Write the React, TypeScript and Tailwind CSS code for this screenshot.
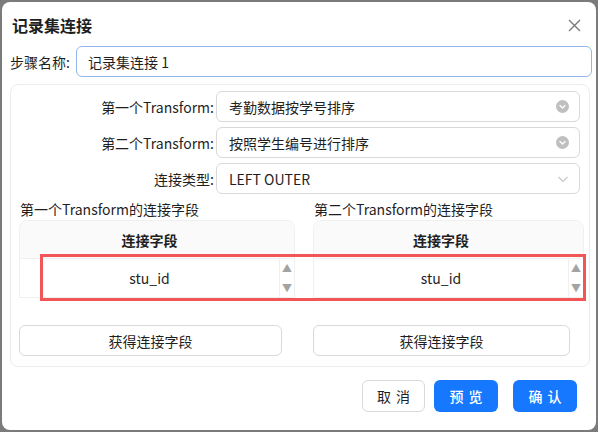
import React from 'react';

const font = { fontFamily: '"Noto Sans CJK SC", "Noto Sans", sans-serif' };

const ClearIcon = () => (
  <svg width="13" height="13" viewBox="0 0 13 13">
    <circle cx="6.5" cy="6.5" r="6.5" fill="#bfbfbf" />
    <path d="M4 5.5 L6.5 8 L9 5.5" stroke="#fff" strokeWidth="1.4" fill="none" strokeLinecap="round" strokeLinejoin="round" />
  </svg>
);

const Chevron = () => (
  <svg width="12" height="12" viewBox="0 0 12 12">
    <path d="M1.5 4 L6 8.5 L10.5 4" stroke="#c4c4c4" strokeWidth="1.1" fill="none" />
  </svg>
);

const SelectRow = ({ label, value, clear }: { label: string; value: string; clear: boolean }) => (
  <div className="flex items-center h-[31px]">
    <div className="w-[205px] pr-[2px] text-right text-[14px] leading-[20px] whitespace-nowrap text-[#1f1f1f]">{label}:</div>
    <div className="w-[364px] h-[31px] border border-[#d9d9d9] rounded-md flex items-center justify-between pl-[12px] pr-[10px] text-[14px] leading-[20px] text-[#1f1f1f]">
      <span>{value}</span>
      {clear ? <ClearIcon /> : <Chevron />}
    </div>
  </div>
);

const FieldTable = ({ title, width, btnWidth }: { title: string; width: string; btnWidth: string }) => (
  <div className="flex flex-col">
    <div className="text-[14px] text-[#1f1f1f] leading-[20px] pl-[1px]">{title}</div>
    <div className={`${width} mt-[1px] border border-[#f0f0f0] rounded-t-lg`}>
      <div className="h-[38px] bg-[#fafafa] rounded-t-lg flex items-center pr-[15px] border-b border-[#f0f0f0]">
        <div className="flex-1 text-center text-[14px] leading-[20px] font-bold text-[#1f1f1f]">连接字段</div>
      </div>
      <div className="flex h-[38px]">
        <div className="flex-1 flex items-center justify-center text-[14px] text-[#1f1f1f] border-r border-[#f0f0f0]">stu_id</div>
        <div className="w-[14px] flex flex-col items-center justify-between py-[3px] text-[#a3a3a3] text-[10px] leading-[12px]">
          <span>▲</span>
          <span>▼</span>
        </div>
      </div>
    </div>
    <button className={`${btnWidth} h-[31px] mt-[27px] border border-[#d9d9d9] rounded-md bg-white text-[14px] leading-[20px] text-[#1f1f1f]`}>
      获得连接字段
    </button>
  </div>
);

export default function App() {
  return (
    <div className="w-[598px] h-[432px] bg-[#7b7b7b] p-[2px]" style={font}>
      <div className="relative w-[594px] h-[428px] bg-white rounded-lg">
        <div className="flex items-center justify-between pl-[10px] pr-[15px] pt-[12px]">
          <div className="text-[16px] leading-[22px] font-bold text-[#1f1f1f]">记录集连接</div>
          <svg width="13" height="13" viewBox="0 0 13 13">
            <path d="M1 1 L12 12 M12 1 L1 12" stroke="#7a7a7a" strokeWidth="1.4" />
          </svg>
        </div>

        <div className="flex items-center mt-[10px] pl-[8px]">
          <div className="w-[66px] text-[14px] leading-[20px] whitespace-nowrap text-[#1f1f1f]">步骤名称:</div>
          <div className="w-[516px] h-[31px] border border-[#93b6ee] rounded-md flex items-center pl-[11px] text-[14px] leading-[20px] text-[#1f1f1f]">
            记录集连接 1
          </div>
        </div>

        <div className="ml-[8px] mt-[7px] w-[580px] h-[283px] border border-[#ececec] rounded-lg pt-[6px]">
          <div className="flex flex-col gap-[5px]">
            <SelectRow label="第一个Transform" value="考勤数据按学号排序" clear />
            <SelectRow label="第二个Transform" value="按照学生编号进行排序" clear />
            <SelectRow label="连接类型" value="LEFT OUTER" clear={false} />
          </div>
          <div className="flex gap-[18px] pl-[8px] mt-[5px]">
            <FieldTable title="第一个Transform的连接字段" width="w-[276px]" btnWidth="w-[263px]" />
            <FieldTable title="第二个Transform的连接字段" width="w-[271px]" btnWidth="w-[257px]" />
          </div>
        </div>

        <div className="flex justify-end items-center pr-[19px] mt-[13px]">
          <button className="w-[63px] h-[32px] border border-[#d9d9d9] rounded-md bg-white text-[14px] leading-[20px] tracking-[5px] pl-[5px] text-[#1f1f1f]">取消</button>
          <button className="w-[64px] h-[32px] ml-[9px] rounded-md bg-[#1677ff] text-[14px] leading-[20px] tracking-[5px] pl-[5px] font-medium text-white">预览</button>
          <button className="w-[64px] h-[32px] ml-[15px] rounded-md bg-[#1677ff] text-[14px] leading-[20px] tracking-[5px] pl-[5px] font-medium text-white">确认</button>
        </div>

        <div className="absolute left-[38px] top-[252px] w-[546px] h-[47px] border-[3px] border-[#f25555]" />
      </div>
    </div>
  );
}
